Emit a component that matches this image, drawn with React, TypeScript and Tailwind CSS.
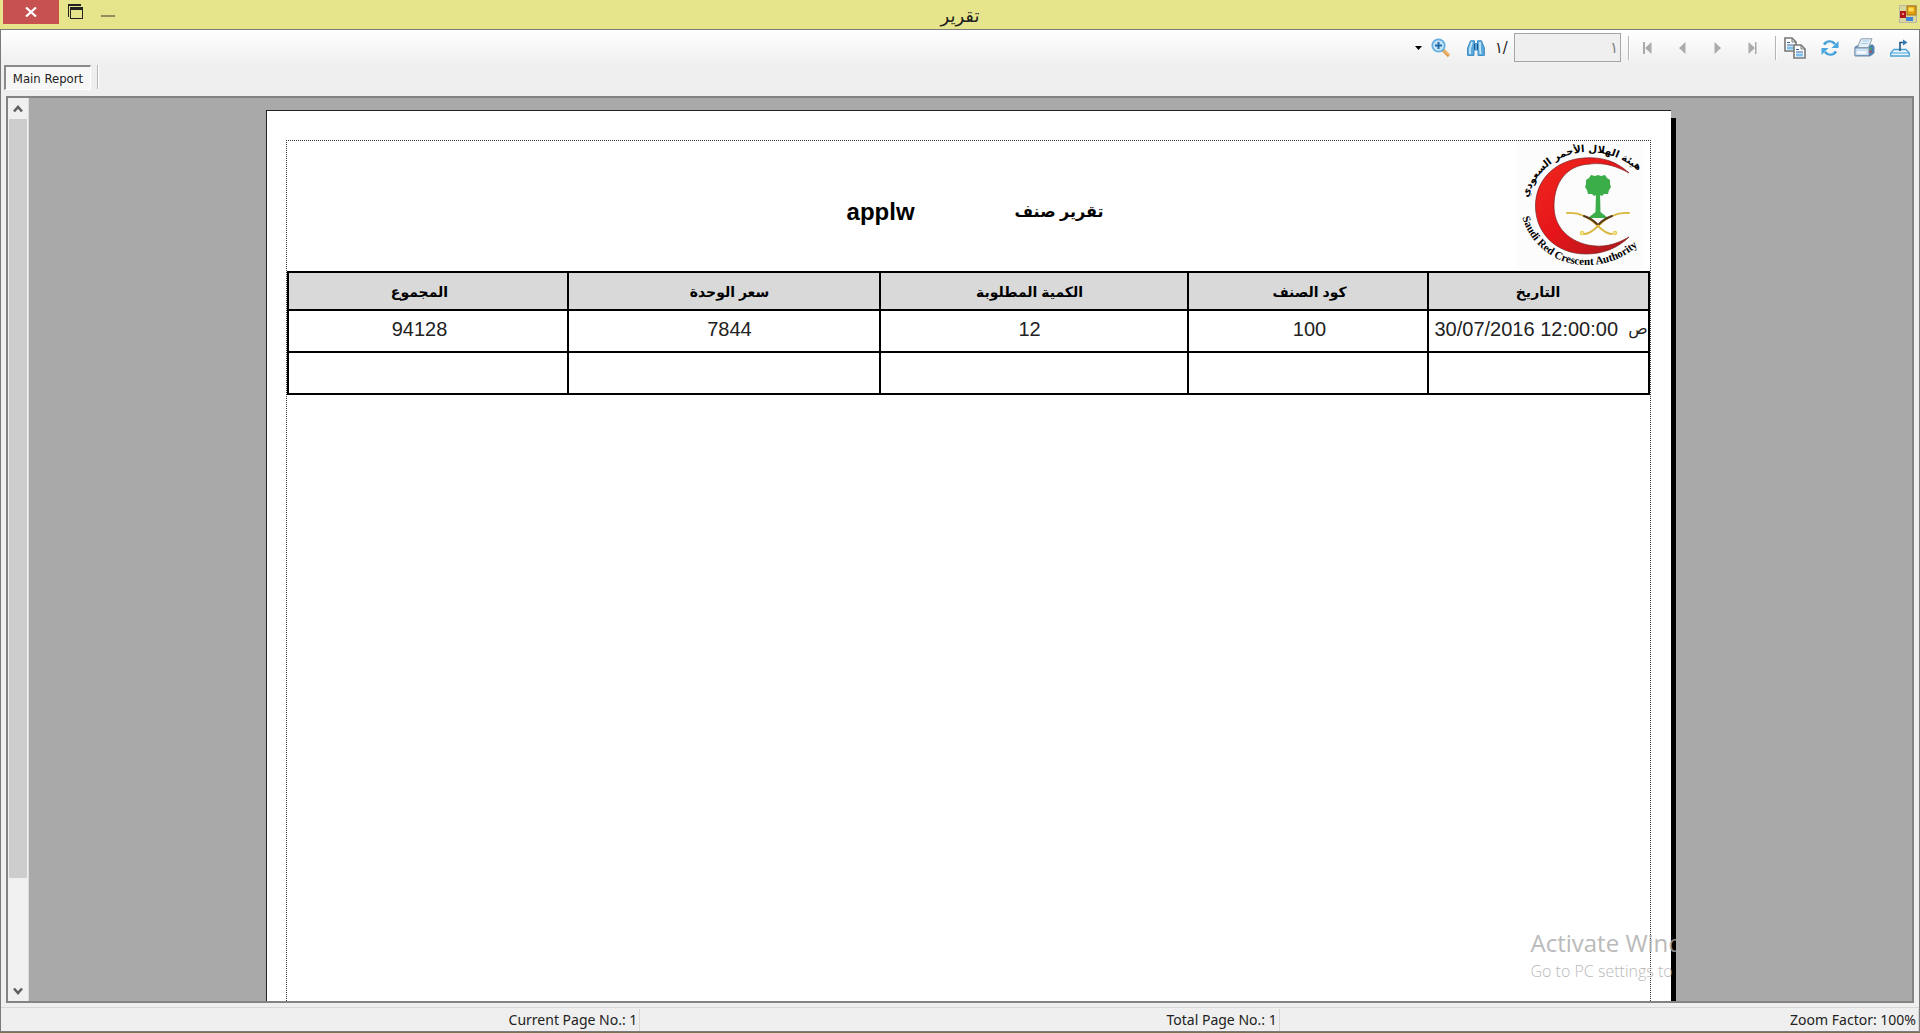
import React, { useState } from "react";

type ReportRow = {
  total: string;
  price: string;
  quantity: string;
  code: string;
  date: string;
};

const rows: ReportRow[] = [
  {
    total: "94128",
    price: "7844",
    quantity: "12",
    code: "100",
    date: "30/07/2016 12:00:00",
  },
  { total: "", price: "", quantity: "", code: "", date: "" },
];

type IconButtonProps = {
  label: string;
  disabled?: boolean;
  children: React.ReactNode;
};

function IconButton({ label, disabled, children }: IconButtonProps) {
  return (
    <button
      type="button"
      aria-label={label}
      disabled={disabled}
      className="flex h-7 w-[35px] items-center justify-center"
    >
      {children}
    </button>
  );
}

function Separator() {
  return <div className="h-6 w-0.5 border-l border-[#b5b5b5] bg-white" />;
}

function TitleBar() {
  return (
    <header className="flex h-[29px] items-start bg-[#e7e58b]">
      <div className="flex flex-1 items-start pl-[3px]">
        <button
          type="button"
          aria-label="Close"
          className="flex h-6 w-14 items-center justify-center bg-[#c75050]"
        >
          <svg width="12" height="10" viewBox="0 0 12 10">
            <path d="M1 0.5 L11 9.5 M11 0.5 L1 9.5" stroke="#fff" strokeWidth="2.2" />
          </svg>
        </button>
        <button type="button" aria-label="Restore" className="ml-2 pt-1 pr-4">
          <svg width="17" height="15" viewBox="0 0 17 15" fill="none" stroke="#222">
            <path d="M1.5 13 V1 H14" />
            <path d="M1 1 H14" strokeWidth="2" />
            <rect x="3.5" y="3.5" width="12" height="11" />
            <path d="M3 4.5 H16" strokeWidth="3" />
          </svg>
        </button>
        <button type="button" aria-label="Minimize" className="h-6 w-4 pt-2 pl-px">
          <span className="block h-0.5 w-3.5 bg-[#8f8d58]" />
        </button>
      </div>
      <h1 className="font-['DejaVu_Sans','Noto_Sans',sans-serif] text-lg leading-8 text-[#222]">
        تقرير
      </h1>
      <div className="flex flex-1 justify-end pt-[5px] pr-[3px]">
        <svg width="18" height="18" viewBox="0 0 18 18">
          <rect x="0.5" y="0.5" width="17" height="17" fill="#d9d7a0" stroke="#bdb9a0" />
          <rect x="1" y="6" width="6" height="7" fill="#b01818" />
          <rect x="3" y="8" width="2" height="2" fill="#e98080" />
          <rect x="8" y="1" width="9" height="9" fill="#e0a010" stroke="#a87818" />
          <rect x="9.5" y="2.5" width="5" height="4" fill="#ffdc50" />
          <rect x="7" y="12" width="7" height="4" fill="#3f86d8" />
        </svg>
      </div>
    </header>
  );
}

function Toolbar() {
  const [page, setPage] = useState("١");

  return (
    <div className="flex h-[35px] items-center justify-end bg-linear-to-b from-white to-[#efefef] pr-0.5">
      <button type="button" aria-label="Zoom levels" className="w-2">
        <svg width="7" height="4" viewBox="0 0 7 4">
          <path d="M0 0 H7 L3.5 4 Z" fill="#000" />
        </svg>
      </button>
      <IconButton label="Zoom">
        <svg width="20" height="20" viewBox="0 0 20 20">
          <path d="M12 12 L18 18" stroke="#e09a48" strokeWidth="3.2" />
          <path d="M12.5 12 L18 17.2" stroke="#f7d29c" strokeWidth="1" />
          <circle cx="7.5" cy="7.5" r="6.2" fill="#c5e4f8" stroke="#63afe0" strokeWidth="1.8" />
          <path d="M4 7.5 H11 M7.5 4 V11" stroke="#2368a8" strokeWidth="2" />
        </svg>
      </IconButton>
      <IconButton label="Find">
        <svg width="18" height="16" viewBox="0 0 18 16">
          <path
            d="M3.5 0.8 H7.5 V3.5 H10.5 V0.8 H14.5 L17.4 8 V15.4 H11 V10 H7 V15.4 H0.6 V8 Z"
            fill="#5aa9dc"
            stroke="#3b8cc4"
          />
          <path d="M5 2 L3 8.5 V14 M13 2 V8 L13.5 14" stroke="#c7e6f8" strokeWidth="1.8" fill="none" />
          <path d="M7.5 4 V9.5 M10.5 4 V9.5" stroke="#1c4f80" />
        </svg>
      </IconButton>
      <label
        htmlFor="page"
        className="w-[21px] pl-0.5 font-['DejaVu_Sans_Condensed',sans-serif] text-base leading-5 text-[#222]"
      >
        ١/
      </label>
      <input
        id="page"
        type="text"
        disabled
        value={page}
        onChange={(e) => setPage(e.target.value)}
        className="mr-[7px] h-[29px] w-[107px] border border-[#a5a5a5] bg-[#efefef] px-0.5 text-right font-['DejaVu_Sans_Condensed',sans-serif] text-base leading-5 text-[#7d7d7d]"
      />
      <Separator />
      <IconButton label="First page" disabled>
        <svg width="9" height="12" viewBox="0 0 9 12" fill="#ababab">
          <path d="M0 0 H2 V12 H0 Z M8.5 0 V12 L2 6 Z" />
        </svg>
      </IconButton>
      <IconButton label="Previous page" disabled>
        <svg width="7" height="12" viewBox="0 0 7 12" fill="#ababab">
          <path d="M6.5 0 V12 L0 6 Z" />
        </svg>
      </IconButton>
      <IconButton label="Next page" disabled>
        <svg width="7" height="12" viewBox="0 0 7 12" fill="#ababab">
          <path d="M0.5 0 V12 L7 6 Z" />
        </svg>
      </IconButton>
      <IconButton label="Last page" disabled>
        <svg width="9" height="12" viewBox="0 0 9 12" fill="#ababab">
          <path d="M7 0 H8.5 V12 H7 Z M0.5 0 V12 L7 6 Z" />
        </svg>
      </IconButton>
      <div className="pl-[5px]">
        <Separator />
      </div>
      <IconButton label="Copy">
        <svg width="22" height="22" viewBox="0 0 22 22">
          <path d="M1 1 H8 L12 5 V14 H1 Z" fill="#fff" stroke="#777" strokeWidth="1.6" />
          <path d="M8 1 V5 H12" fill="none" stroke="#777" />
          <path d="M3 5.5 H6 M3 8 H9" stroke="#355f9a" />
          <path d="M3 11 H10" stroke="#7cc0f0" strokeWidth="3" />
          <path d="M10 8 H17 L21 12 V21 H10 Z" fill="#fff" stroke="#777" strokeWidth="1.6" />
          <path d="M17 8 V12 H21" fill="none" stroke="#777" />
          <path d="M12 12.5 H15 M12 15 H19" stroke="#355f9a" />
          <path d="M12 18 H19" stroke="#7cc0f0" strokeWidth="3" />
        </svg>
      </IconButton>
      <IconButton label="Refresh">
        <svg width="18" height="16" viewBox="0 0 18 16">
          <path d="M3 4.5 C6 0.5 11 0.5 14 4" fill="none" stroke="#3d9bd6" strokeWidth="2.6" />
          <path d="M17.5 1 V8 H10.5 Z" fill="#4aa7df" />
          <path d="M15 11.5 C12 15.5 7 15.5 4 12" fill="none" stroke="#3d9bd6" strokeWidth="2.6" />
          <path d="M0.5 15 V8 H7.5 Z" fill="#4aa7df" />
          <path d="M5 3.5 C7.5 1.8 10 2 12 3.6 M13 12.5 C10.5 14.2 8 14 6 12.4" fill="none" stroke="#b9e0f6" strokeWidth="0.8" />
        </svg>
      </IconButton>
      <IconButton label="Print">
        <svg width="21" height="19" viewBox="0 0 21 19">
          <path d="M1 9 L5 7 H19 L20 9 V15 L16 18 H1 Z" fill="#4580b8" stroke="#6c87a8" />
          <path d="M1 10 H15 V17.5 H1 Z" fill="#cfe2f3" stroke="#7894b2" />
          <path d="M7 0.8 H18 L14.5 9.5 H3.5 Z" fill="#e4f1fa" stroke="#8c9cac" />
          <path d="M8.5 3 H15 M7.5 5.5 H14" stroke="#a9c8e4" />
          <path d="M3 14.5 H12" stroke="#fff" strokeWidth="2" />
          <rect x="15.5" y="9.5" width="2" height="2" fill="#45b34a" />
          <rect x="15.5" y="12.5" width="2" height="2" fill="#d8412f" />
        </svg>
      </IconButton>
      <IconButton label="Export">
        <svg width="20" height="18" viewBox="0 0 20 18" fill="none">
          <path d="M4 10.5 H16 L19.3 14 V17 H0.7 V14 Z" fill="#e9f5fc" stroke="#4aa3d8" strokeWidth="1.3" />
          <path d="M1 14 H19" stroke="#4aa3d8" />
          <path d="M10 12 V3.5 H15" stroke="#24557f" strokeWidth="1.6" />
          <path d="M13 0.5 L17.5 3.5 L13 6.5 Z" fill="#2f7db5" />
        </svg>
      </IconButton>
    </div>
  );
}

function Logo() {
  return (
    <svg width="128" height="129" viewBox="16 11 128 129" role="img" aria-label="Saudi Red Crescent Authority">
      <defs>
        <path id="logo-top" d="M27 71 C34 41 59 22 88 22 C107 22 125 29 141 43" />
        <path id="logo-bottom" d="M21 82 C27 111 52 135 86 135 C108 135 127 127 142 112" />
        <linearGradient id="logo-red" x1="0" y1="0" x2="1" y2="1">
          <stop offset="0" stopColor="#f0281e" />
          <stop offset="0.5" stopColor="#e5151a" />
          <stop offset="1" stopColor="#a81a1c" />
        </linearGradient>
      </defs>
      <rect x="16" y="11" width="128" height="129" fill="#fcfcfc" />
      <path
        d="M129 43 C114 29 98 27 84 28 C55 30 35.5 50 35.5 76 C35.5 103 56 124 86 124 C103 124 118 118 129 107 C115 115 103 118 88 115 C66 110 54 95 54 76 C54 53 66 35 90 34 C105 32 118 37 129 43 Z"
        fill="url(#logo-red)"
        stroke="#7a2420"
        strokeWidth="0.7"
      />
      <g fill="#3bae49">
        <path d="M96 62 H100 L100.5 82 L108 88 H88 L95.5 82 Z" />
        <path d="M98 45 L101 46 L105 45 L107 48 L110 50 L110 54 L111 57 L109 60 L108 64 L104 64 L102 66 L98 64 L94 66 L92 64 L88 64 L87 60 L85 57 L86 54 L86 50 L89 48 L91 45 L95 46 Z" />
      </g>
      <g fill="none" strokeLinecap="round">
        <path d="M67 83 C78 82 88 86 98 96 C103 101 107 104 112 104" stroke="#d9b63c" strokeWidth="1.8" />
        <path d="M129 83 C118 82 108 86 98 96 C93 101 89 104 84 104" stroke="#d9b63c" strokeWidth="1.8" />
        <path d="M84 86 C90 88 94 91 97 94 M112 86 C106 88 102 91 99 94" stroke="#5a3a1c" strokeWidth="2" />
        <circle cx="82" cy="103" r="1.5" stroke="#e8cf50" strokeWidth="1.4" />
        <circle cx="115" cy="103" r="1.5" stroke="#e8cf50" strokeWidth="1.4" />
      </g>
      <text className="font-['DejaVu_Sans',sans-serif] text-[10px] font-bold" textAnchor="middle">
        <textPath href="#logo-top" startOffset="50%">
          هيئة الهلال الأحمر السعودي
        </textPath>
      </text>
      <text className="font-['Liberation_Serif',serif] text-[11px] font-bold" textAnchor="middle">
        <textPath href="#logo-bottom" startOffset="50%">
          Saudi Red Crescent Authority
        </textPath>
      </text>
    </svg>
  );
}

function ReportTable() {
  return (
    <table className="w-full table-fixed border-collapse border-2 border-black text-center text-xl leading-6">
      <colgroup>
        <col className="w-[280px]" />
        <col className="w-[312px]" />
        <col className="w-[308px]" />
        <col className="w-[240px]" />
        <col />
      </colgroup>
      <thead className="bg-[#d9d9d9] text-sm font-bold">
        <tr className="h-[38px]">
          <th className="border-x-2 border-y border-black pt-0.5 pr-4">المجموع</th>
          <th className="border-x-2 border-y border-black pt-0.5 pl-3">سعر الوحدة</th>
          <th className="border-x-2 border-y border-black pt-0.5 pr-2">الكمية المطلوبة</th>
          <th className="border-x-2 border-y border-black pt-0.5 pl-1">كود الصنف</th>
          <th className="border-x-2 border-y border-black pt-0.5">التاريخ</th>
        </tr>
      </thead>
      <tbody className="text-[#222]">
        {rows.map((row, index) => (
          <tr key={index} className="h-[42px]">
            <td className="border-2 border-black pr-4 pb-1">{row.total}</td>
            <td className="border-2 border-black pb-1 pl-3">{row.price}</td>
            <td className="border-2 border-black pr-2 pb-1">{row.quantity}</td>
            <td className="border-2 border-black pb-1 pl-1">{row.code}</td>
            <td className="border-2 border-black pb-1 whitespace-nowrap">
              {row.date && (
                <span className="flex justify-between pl-1.5">
                  <span>{row.date}</span>
                  <span className="text-base leading-6">ص</span>
                </span>
              )}
            </td>
          </tr>
        ))}
      </tbody>
    </table>
  );
}

function ReportPage() {
  return (
    <div className="relative mt-3 flex w-[1410px] shrink-0 font-['Liberation_Sans','DejaVu_Sans',sans-serif] text-black">
      <div className="flex flex-1 flex-col border-t border-l border-[#222] bg-white pt-[29px] pr-5 pl-[19px]">
        <div className="flex flex-1 flex-col border-x border-t border-dotted border-[#333]">
          <div className="flex h-[130px] items-start">
            <div className="flex flex-1 items-center justify-end gap-[100px] pt-[55px] pr-[540px] font-bold">
              <span className="text-2xl leading-8">applw</span>
              <h2 className="text-base leading-8">تقرير صنف</h2>
            </div>
            <div className="-ml-32 pr-1.5">
              <Logo />
            </div>
          </div>
          <ReportTable />
        </div>
      </div>
      <div className="mt-2 w-[5px] bg-black" />
      <div className="absolute bottom-4 left-[1265px] font-['Open_Sans','Noto_Sans',sans-serif] whitespace-nowrap text-[#a9a9a9] opacity-80">
        <p className="text-2xl leading-7">Activate Windows</p>
        <p className="text-base leading-7 font-light">Go to PC settings to activate Windows.</p>
      </div>
    </div>
  );
}

function ScrollBar() {
  return (
    <div className="flex w-[21px] flex-col border-r border-[#dcdcdc] bg-[#f0f0f0]">
      <button type="button" aria-label="Scroll up" className="flex h-[21px] items-center justify-center">
        <svg width="10" height="8" viewBox="0 0 10 8" fill="none">
          <path d="M1 6.5 L5 2 L9 6.5" stroke="#606060" strokeWidth="2.6" />
        </svg>
      </button>
      <div className="mx-px grow-[760] bg-[#cdcdcd]" />
      <div className="grow-[102]" />
      <button type="button" aria-label="Scroll down" className="flex h-[21px] items-center justify-center">
        <svg width="10" height="8" viewBox="0 0 10 8" fill="none">
          <path d="M1 1.5 L5 6 L9 1.5" stroke="#606060" strokeWidth="2.6" />
        </svg>
      </button>
    </div>
  );
}

function StatusBar() {
  return (
    <footer className="grid h-6 grid-cols-3 border-t border-[#d7d7d7] text-right font-['Noto_Sans','Open_Sans',sans-serif] text-sm text-[#222]">
      <span className="my-px border-r border-[#d7d7d7] pr-0.5 leading-[22px]">Current Page No.: 1</span>
      <span className="my-px border-r border-[#d7d7d7] pr-0.5 leading-[22px]">Total Page No.: 1</span>
      <span className="my-px border-r border-[#d7d7d7] pr-0.5 leading-[22px]">Zoom Factor: 100%</span>
    </footer>
  );
}

function App() {
  return (
    <div className="flex h-screen flex-col overflow-hidden border-b border-[#77754f] bg-[#efefef]">
      <TitleBar />
      <main className="flex min-h-0 flex-1 flex-col border border-[#7a7a7a]">
        <Toolbar />
        <div className="flex h-[31px] items-start pl-[3px]">
          <button
            type="button"
            className="h-[25px] w-[87px] border-t-2 border-r border-b border-l-2 border-t-[#8a8a8a] border-r-white border-b-white border-l-[#8a8a8a] bg-[#f7f7f7] pt-0.5 font-['DejaVu_Sans_Condensed',sans-serif] text-[13px] leading-5 text-[#222]"
          >
            Main Report
          </button>
          <div className="ml-1.5">
            <Separator />
          </div>
        </div>
        <div className="mr-[5px] mb-1 ml-[5px] flex min-h-0 flex-1 border-2 border-[#838383] bg-[#a9a9a9]">
          <ScrollBar />
          <div className="flex min-w-0 flex-1 justify-center overflow-hidden">
            <ReportPage />
          </div>
        </div>
        <StatusBar />
      </main>
    </div>
  );
}

export default App;
